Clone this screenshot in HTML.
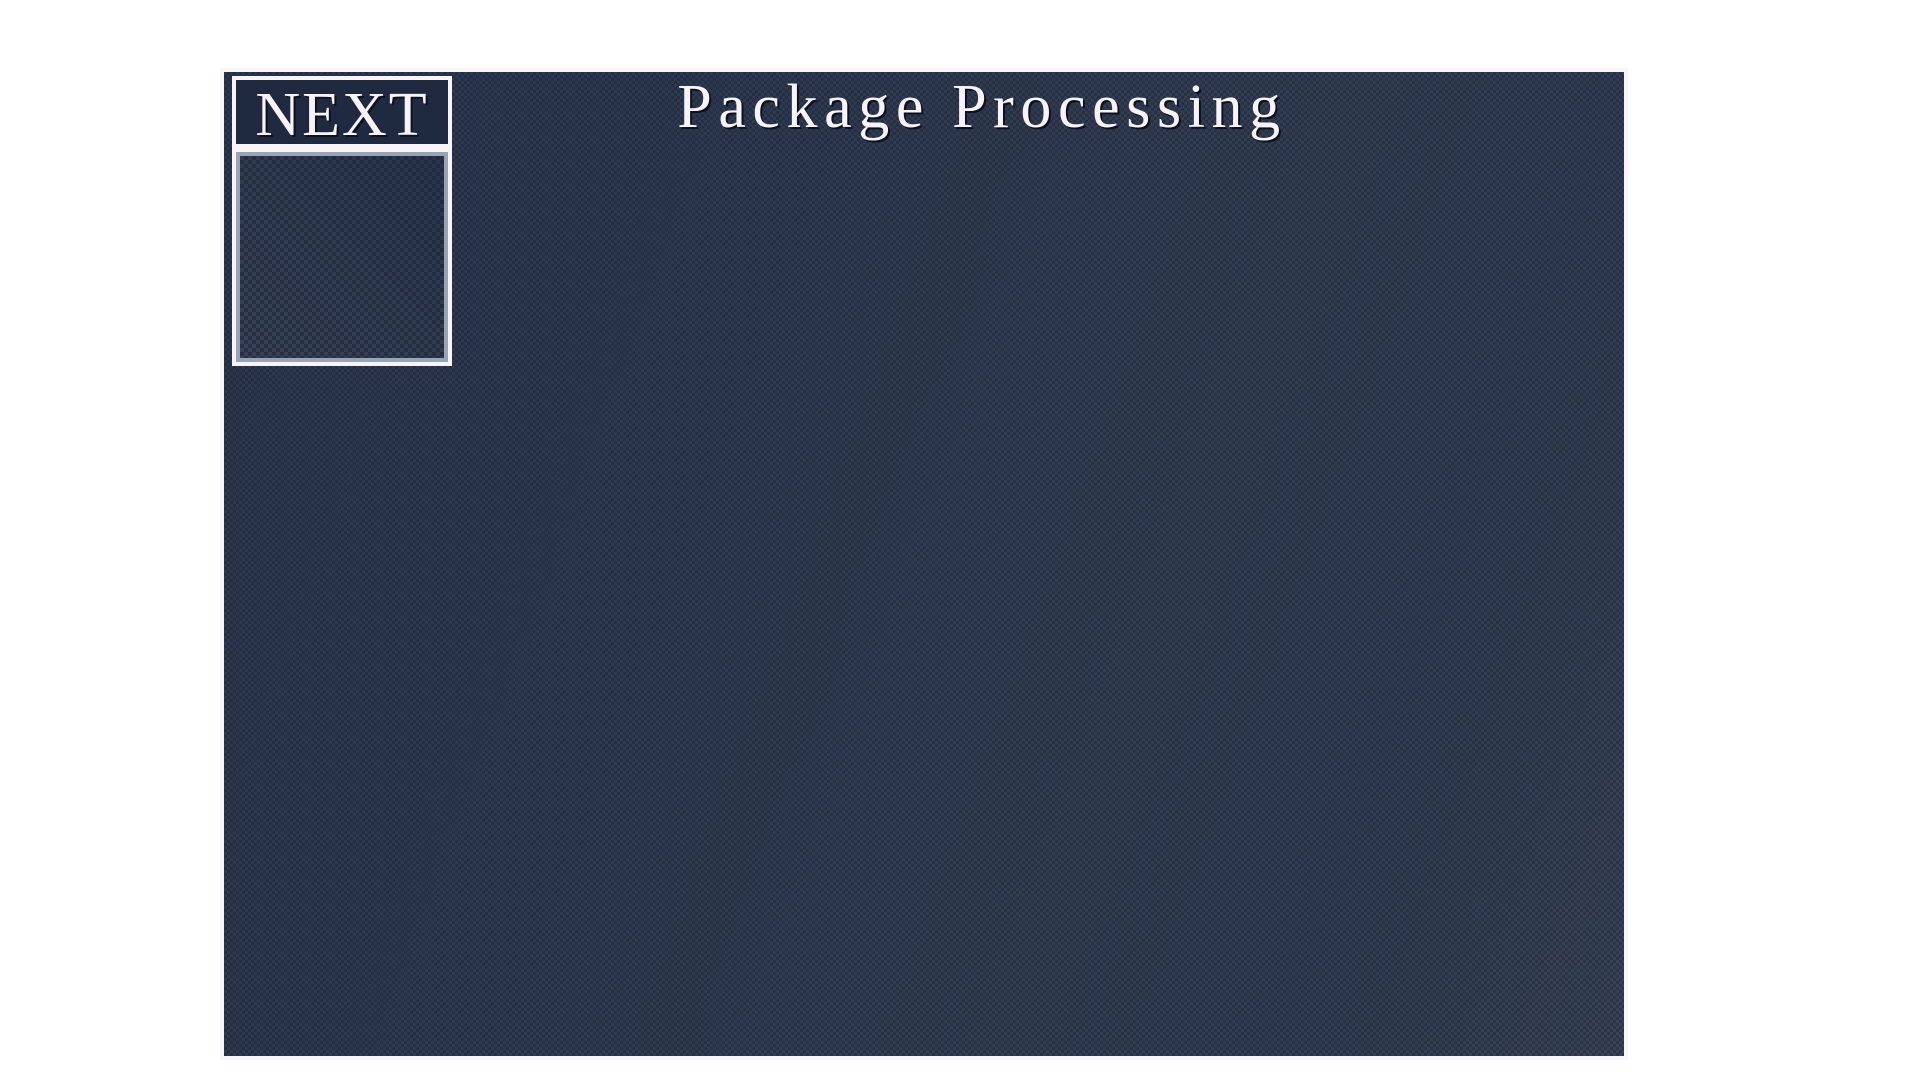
<!DOCTYPE html>
<html><head><style>
html,body{margin:0;padding:0;width:1920px;height:1080px;background:#fff;overflow:hidden}
#frame{position:absolute;left:220px;top:68px;width:1408px;height:992px;background:#f8f4f8}
#game{position:absolute;left:224px;top:72px;width:1400px;height:984px;
background:
repeating-conic-gradient(rgba(31,42,64,.55) 0 25%, rgba(58,66,84,.35) 0 50%) 0 0/6px 6px,
linear-gradient(110deg,#24304a 0%,#2c364b 40%,#323b4f 65%,#2e384d 80%,#3a4254 100%);}
#title{position:absolute;left:22px;width:1920px;top:72px;text-align:center;color:#f8f3f8;
font:62px "Liberation Serif",serif;letter-spacing:6.6px;text-shadow:2px 2px 0 #0c1220}
#nextbox{position:absolute;left:232px;top:76px;width:220px;height:290px;background:#f8f3f8}
#nexthead{position:absolute;left:236px;top:80px;width:212px;height:64px;background:#1f2a40;
color:#f8f3f8;font:62px "Liberation Serif",serif;letter-spacing:2px;text-align:center;line-height:70px;text-shadow:2px 2px 0 #0c1220}
#nextin{position:absolute;left:236px;top:152px;width:212px;height:210px;background:#9aa3b3}
#nextin2{position:absolute;left:240px;top:156px;width:204px;height:202px;
background:repeating-conic-gradient(rgba(31,42,64,.7) 0 25%, rgba(58,66,84,.4) 0 50%) 0 0/8px 8px,linear-gradient(45deg,#3a4254,#1f2a40)}
</style></head><body>
<div id="frame"></div>
<div id="game"></div>
<div id="nextbox"></div>
<div id="nexthead">NEXT</div>
<div id="nextin"></div>
<div id="nextin2"></div>
<div id="title">Package Processing</div>
</body></html>
